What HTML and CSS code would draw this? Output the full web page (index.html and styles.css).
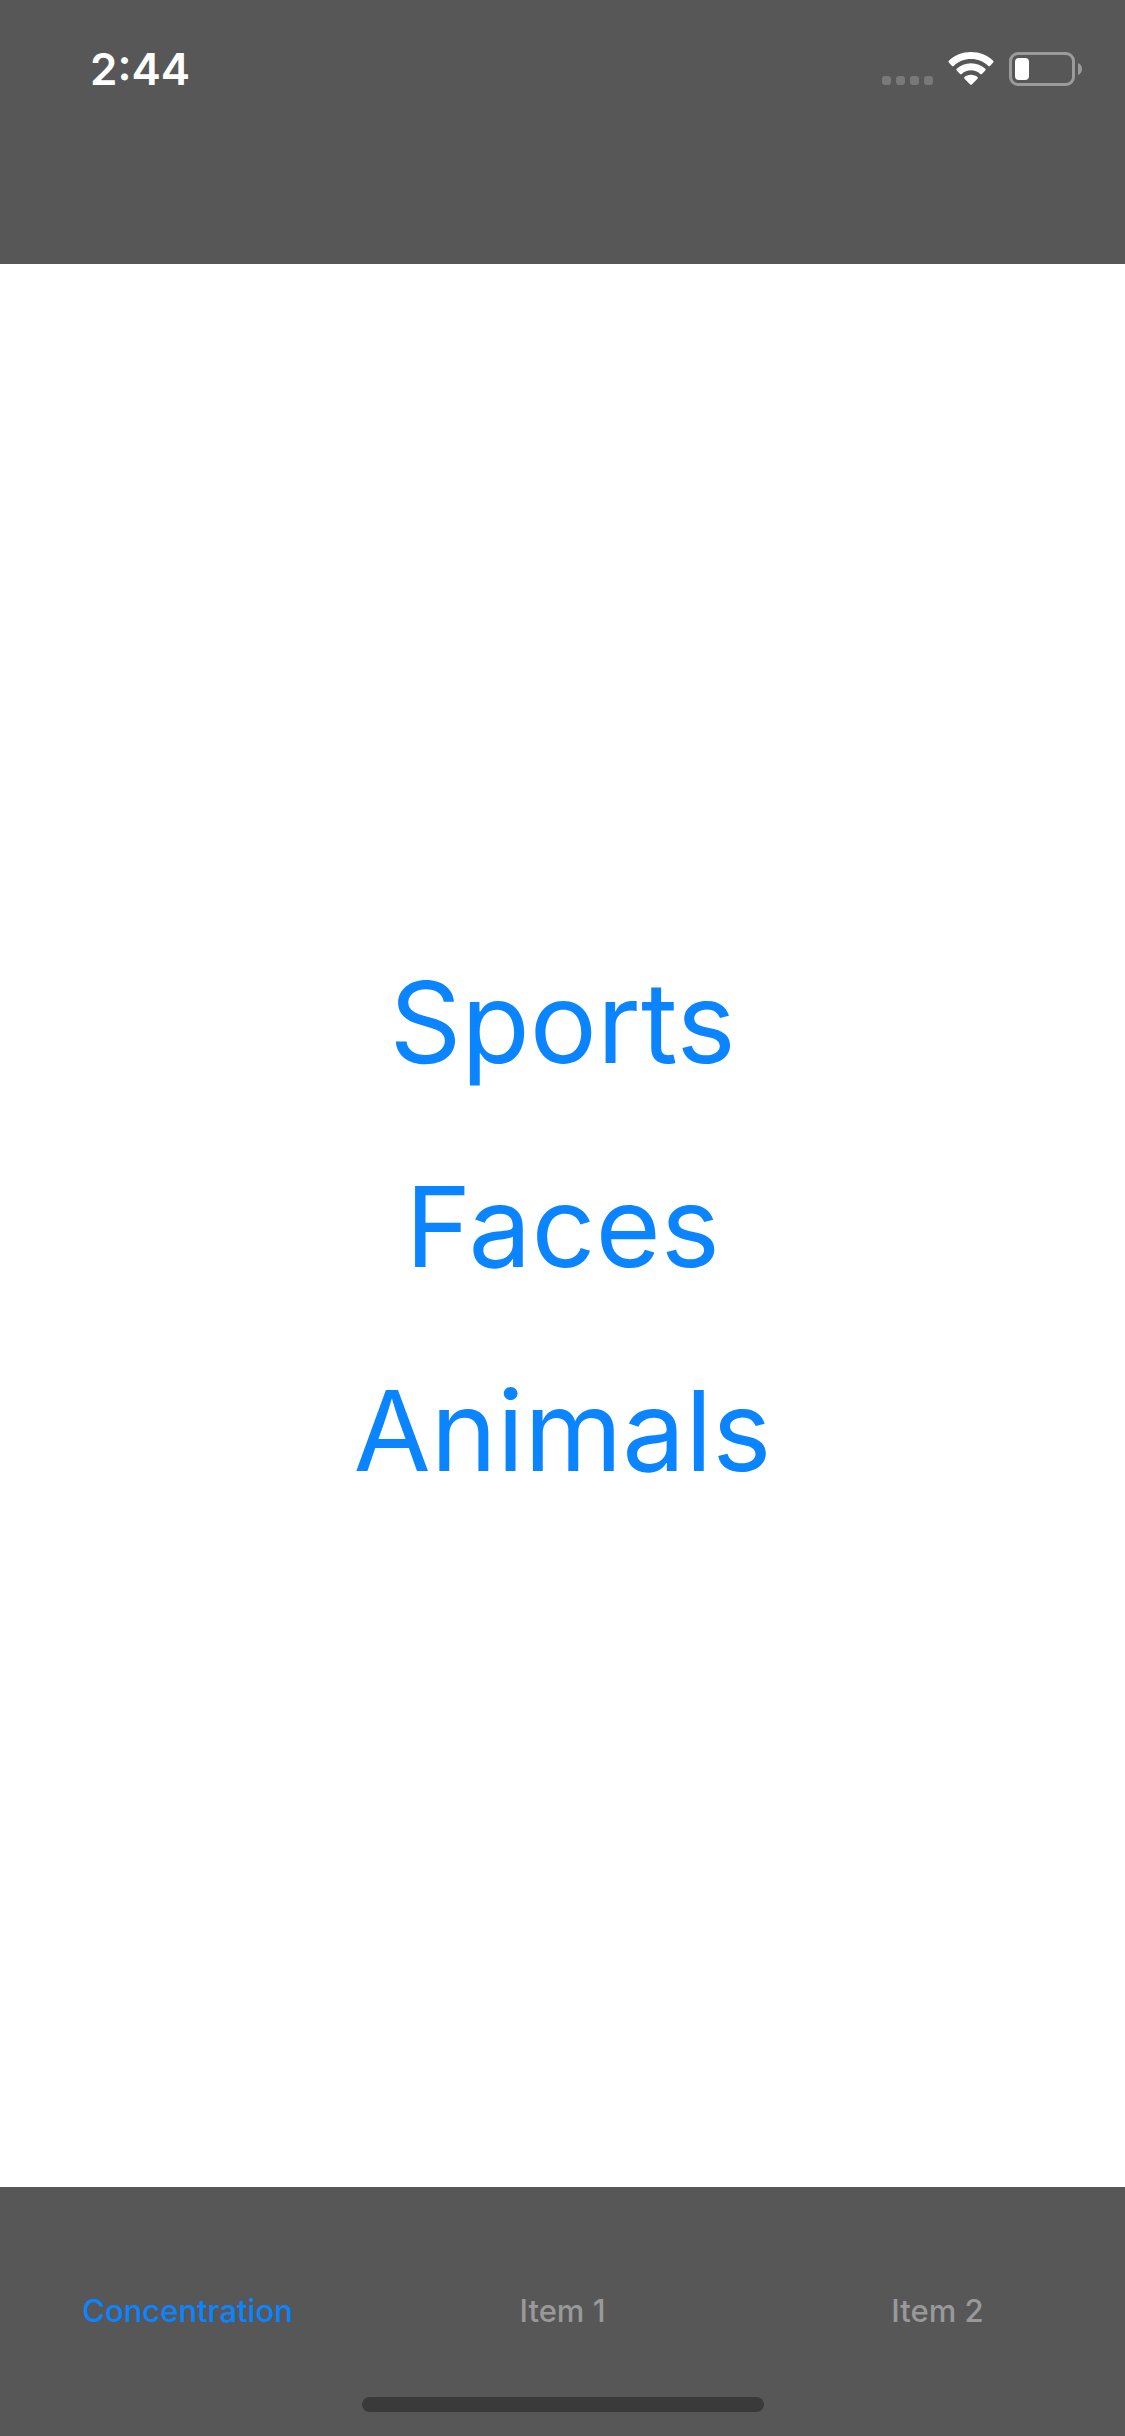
FILE: index.html
```html
<!DOCTYPE html>
<html lang="en">
<head>
<meta charset="utf-8">
<meta name="viewport" content="width=device-width, initial-scale=1">
<title>Concentration</title>
<link rel="stylesheet" href="styles.css">
</head>
<body>
<header class="top-bar">
  <div class="status">
    <time class="clock">2:44</time>
    <div class="indicators">
      <svg class="signal" width="51" height="34" viewBox="0 0 51 34" role="img" aria-label="No signal">
        <rect x="0" y="24" width="9" height="9" rx="3"/>
        <rect x="14" y="24" width="9" height="9" rx="3"/>
        <rect x="28" y="24" width="9" height="9" rx="3"/>
        <rect x="42" y="24" width="9" height="9" rx="3"/>
      </svg>
      <svg class="wifi" width="46" height="34" viewBox="0 0 46 34" role="img" aria-label="Wi-Fi">
        <path d="M23 0C14.400 0 6.600 3.300 .8 8.800Q0 9.700.8 10.500L4 13.900Q4.800 14.700 5.700 13.900C10.200 9.700 16.300 7.100 23 7.100S35.800 9.700 40.300 13.900Q41.200 14.700 42 13.900L45.200 10.500Q46 9.700 45.200 8.800C39.400 3.300 31.600 0 23 0Z"/>
        <path d="M23 11.200C17.400 11.200 12.500 13.300 8.700 16.800Q7.900 17.600 8.700 18.500L12.100 21.900Q12.900 22.700 13.800 21.900C16.200 19.700 19.400 18.300 23 18.300S29.800 19.700 32.200 21.900Q33.100 22.700 33.900 21.900L37.300 18.500Q38.100 17.600 37.300 16.800C33.500 13.300 28.600 11.200 23 11.200Z"/>
        <path d="M23 22.800C20.500 22.800 18.200 23.700 16.500 25.100Q15.700 25.900 16.500 26.700L22.200 32.400Q23 33.200 23.800 32.400L29.500 26.700Q30.300 25.900 29.500 25.100C27.800 23.700 25.500 22.800 23 22.800Z"/>
      </svg>
      <svg class="battery" width="73" height="34" viewBox="0 0 73 34" role="img" aria-label="Battery low">
        <rect class="battery-shell" x="1.500" y="1.500" width="63" height="31" rx="7.500"/>
        <path class="battery-cap" d="M69 11C71.500 12 73 14.300 73 17S71.500 22 69 23Z"/>
        <rect class="battery-level" x="6" y="6" width="14" height="22" rx="4"/>
      </svg>
    </div>
  </div>
</header>
<main class="themes">
  <button class="theme" type="button">Sports</button>
  <button class="theme" type="button">Faces</button>
  <button class="theme" type="button">Animals</button>
</main>
<footer class="bottom-bar">
  <nav class="tabs">
    <button class="tab tab-active" type="button" aria-current="page">Concentration</button>
    <button class="tab" type="button">Item 1</button>
    <button class="tab" type="button">Item 2</button>
  </nav>
  <div class="home-indicator"></div>
</footer>
</body>
</html>
```
FILE: styles.css
```css
* {
  box-sizing: border-box;
}

body {
  margin: 0;
  min-height: 100vh;
  display: flex;
  flex-direction: column;
  background: #fff;
  font-family: Inter, "Liberation Sans", sans-serif;
}

button {
  margin: 0;
  padding: 0;
  border: 0;
  background: none;
  font: inherit;
  cursor: pointer;
}

.top-bar {
  padding-bottom: 126px;
  background: #575757;
}

.status {
  display: flex;
  align-items: center;
  justify-content: space-between;
  height: 138px;
  padding: 0 43px 0 90px;
}

.clock {
  color: #fff;
  font-size: 44px;
  font-weight: 600;
  line-height: 54px;
}

.indicators {
  display: flex;
  gap: 15px;
}

.signal {
  fill: #797979;
}

.wifi,
.battery-level {
  fill: #fff;
}

.battery-shell {
  fill: none;
  stroke: #9b9b9b;
  stroke-width: 3px;
}

.battery-cap {
  fill: #9b9b9b;
}

.themes {
  flex: 1;
  display: flex;
  flex-direction: column;
  align-items: center;
  justify-content: center;
}

.theme {
  color: #0a84ff;
  font-size: 112px;
  line-height: 204px;
}

.bottom-bar {
  display: flex;
  flex-direction: column;
  align-items: center;
  gap: 68px;
  padding: 106px 0 24px;
  background: #575757;
}

.tabs {
  display: grid;
  grid-template-columns: repeat(3, 1fr);
  width: 100%;
}

.tab {
  color: #999;
  font-size: 31px;
  font-weight: 500;
  line-height: 36px;
}

.tab-active {
  color: #0a84ff;
}

.home-indicator {
  width: 402px;
  height: 15px;
  border-radius: 8px;
  background: #3a3a3a;
}
```
